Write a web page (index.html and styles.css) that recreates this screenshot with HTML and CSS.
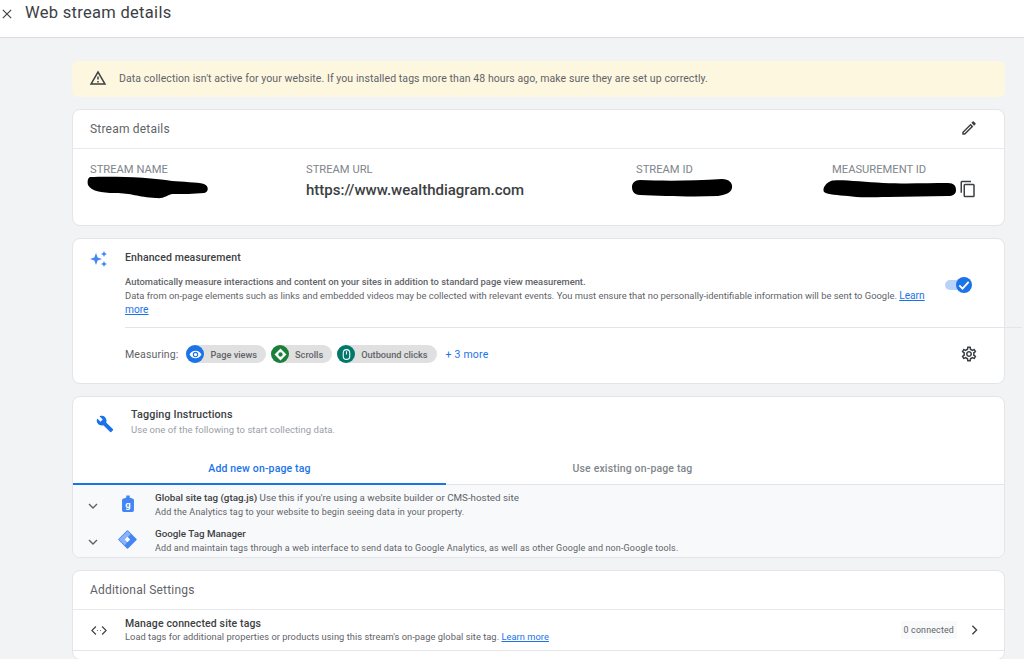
FILE: index.html
```html
<!DOCTYPE html>
<html lang="en">
<head>
    <meta charset="UTF-8">
    <meta name="viewport" content="width=device-width, initial-scale=1.0">
    <title>Web stream details</title>
    <link rel="stylesheet" href="styles.css">
</head>
<body>
    <header class="topbar">
        <svg class="close-icon" viewBox="0 0 12 12"><path d="M1 1l10 10M11 1L1 11"/></svg>
        <h1>Web stream details</h1>
    </header>

    <main class="content">
        <div class="banner">
            <svg class="warn-icon" viewBox="0 0 24 24"><path d="M1 21h22L12 2 1 21zm3.47-2L12 6l7.53 13H4.47zM11 16h2v2h-2zm0-6h2v4h-2z"/></svg>
            <span>Data collection isn't active for your website. If you installed tags more than 48 hours ago, make sure they are set up correctly.</span>
        </div>

        <section class="card">
            <div class="card-head">
                <h2>Stream details</h2>
                <svg class="icon-dark pencil-icon" viewBox="0 0 24 24"><path d="M3 17.25V21h3.75L17.81 9.94l-3.75-3.75L3 17.25zM5.92 19H5v-.92l9.06-9.06.92.92L5.92 19zM20.71 7.04a1 1 0 0 0 0-1.41l-2.34-2.34a1 1 0 0 0-1.41 0l-1.83 1.83 3.75 3.75 1.83-1.83z"/></svg>
            </div>
            <div class="stream-grid">
                <div>
                    <div class="field-label">STREAM NAME</div>
                    <svg class="blot blot-name" viewBox="0 0 121 23"><path d="M3 1C25 0 65 1 85 5c10 1 25 1 32 3 5 2 5 8 0 9-10 1-22 1-32 1-5 1-8 5-16 4C50 21 45 17 28 17 14 17 4 15 1 9 0 5 1 2 3 1z"/></svg>
                </div>
                <div>
                    <div class="field-label">STREAM URL</div>
                    <div class="field-value">https://www.wealthdiagram.com</div>
                </div>
                <div>
                    <div class="field-label">STREAM ID</div>
                    <svg class="blot blot-id" viewBox="0 0 101 18"><path d="M8 1C30 2 60 2 90 0c7 0 11 4 10 9-1 5-7 7-14 8C60 18 30 17 8 16 2 16 0 12 0 8 0 4 3 1 8 1z"/></svg>
                </div>
                <div>
                    <div class="field-label">MEASUREMENT ID</div>
                    <div class="id-row">
                        <svg class="blot blot-mid" viewBox="0 0 133 18"><path d="M8 1C14-1 40 2 60 3c25 1 45 0 65 0 6 0 8 3 8 7 0 4-3 6-8 6-20 0-40 1-60 1-15 0-30 1-40-1C15 15 5 15 1 12-1 8 3 3 8 1z"/></svg>
                        <svg class="icon-dark copy-icon" viewBox="0 0 24 24"><path d="M16 1H4a2 2 0 0 0-2 2v14h2V3h12V1zm3 4H8a2 2 0 0 0-2 2v14a2 2 0 0 0 2 2h11a2 2 0 0 0 2-2V7a2 2 0 0 0-2-2zm0 16H8V7h11v14z"/></svg>
                    </div>
                </div>
            </div>
        </section>

        <section class="card enhanced">
            <svg class="spark-icon" viewBox="0 0 18 18"><path d="M6 3l1.600 4.400L12 9l-4.400 1.600L6 15l-1.600-4.400L0 9l4.400-1.600zM14 1l.9 2.100L17 4l-2.100.9L14 7l-.9-2.100L11 4l2.100-.9zM14 11l.9 2.100L17 14l-2.100.9L14 17l-.9-2.100L11 14l2.100-.9z"/></svg>
            <div class="enhanced-body">
                <h3>Enhanced measurement</h3>
                <div class="enhanced-desc">
                    <div class="enhanced-text">
                        <p class="strong-line">Automatically measure interactions and content on your sites in addition to standard page view measurement.</p>
                        <p>Data from on-page elements such as links and embedded videos may be collected with relevant events. You must ensure that no personally-identifiable information will be sent to Google. <a href="#">Learn more</a></p>
                    </div>
                    <div class="toggle">
                        <span class="toggle-track"></span>
                        <span class="toggle-knob">
                            <svg viewBox="0 0 12 12"><path d="M2.500 6.300l2.400 2.400 4.600-5"/></svg>
                        </span>
                    </div>
                </div>
                <div class="divider"></div>
                <div class="measuring">
                    <span class="measuring-label">Measuring:</span>
                    <span class="chip">
                        <span class="chip-icon chip-blue">
                            <svg viewBox="0 0 24 24"><path d="M12 5C7 5 3 8 1 12c2 4 6 7 11 7s9-3 11-7c-2-4-6-7-11-7zm0 12a5 5 0 1 1 0-10 5 5 0 0 1 0 10zm0-8a3 3 0 1 0 0 6 3 3 0 0 0 0-6z"/></svg>
                        </span>
                        Page views
                    </span>
                    <span class="chip">
                        <span class="chip-icon chip-green">
                            <svg viewBox="0 0 24 24"><path d="M12 1l11 11-11 11L1 12zM12 8a4 4 0 1 0 0 8 4 4 0 0 0 0-8z"/></svg>
                        </span>
                        Scrolls
                    </span>
                    <span class="chip">
                        <span class="chip-icon chip-teal">
                            <svg viewBox="0 0 24 24"><path d="M12 2a7 7 0 0 0-7 7v6a7 7 0 0 0 14 0V9a7 7 0 0 0-7-7zm5 13a5 5 0 0 1-10 0V9a5 5 0 0 1 10 0v6zM11 6h2v6h-2z"/></svg>
                        </span>
                        Outbound clicks
                    </span>
                    <a class="more-link" href="#">+ 3 more</a>
                    <svg class="icon-dark gear-icon" viewBox="0 0 24 24"><path d="M19.430 12.980c.04-.32.07-.64.07-.98 0-.34-.03-.66-.07-.98l2.110-1.650c.19-.15.24-.42.12-.64l-2-3.460c-.09-.16-.26-.25-.44-.25-.06 0-.12.01-.17.03l-2.490 1c-.52-.4-1.080-.73-1.690-.98l-.38-2.650C14.460 2.180 14.250 2 14 2h-4c-.25 0-.46.18-.49.42l-.38 2.650c-.61.25-1.170.59-1.690.98l-2.490-1c-.06-.02-.12-.03-.18-.03-.17 0-.34.09-.43.25l-2 3.460c-.13.22-.07.49.12.64l2.110 1.650c-.04.32-.07.65-.07.98 0 .33.03.66.07.98l-2.110 1.650c-.19.15-.24.42-.12.64l2 3.460c.09.16.26.25.44.25.06 0 .12-.01.17-.03l2.490-1c.52.4 1.080.73 1.690.98l.38 2.650c.03.24.24.42.49.42h4c.25 0 .46-.18.49-.42l.38-2.650c.61-.25 1.170-.59 1.690-.98l2.490 1c.06.02.12.03.18.03.17 0 .34-.09.43-.25l2-3.460c.12-.22.07-.49-.12-.64l-2.110-1.650zm-1.980-1.710c.04.31.05.52.05.73 0 .21-.02.43-.05.73l-.14 1.130.89.7 1.080.84-.7 1.210-1.270-.51-1.040-.42-.9.68c-.43.32-.84.56-1.250.73l-1.060.43-.16 1.130-.2 1.350h-1.400l-.19-1.350-.16-1.130-1.060-.43c-.43-.18-.83-.41-1.230-.71l-.91-.7-1.060.43-1.270.51-.7-1.210 1.080-.84.89-.7-.14-1.130c-.03-.31-.05-.54-.05-.74s.02-.43.05-.73l.14-1.130-.89-.7-1.080-.84.7-1.210 1.270.51 1.040.42.9-.68c.43-.32.84-.56 1.250-.73l1.060-.43.16-1.130.2-1.350h1.390l.19 1.350.16 1.130 1.060.43c.43.18.83.41 1.230.71l.91.7 1.060-.43 1.270-.51.7 1.210-1.070.85-.89.7.14 1.130zM12 8c-2.210 0-4 1.790-4 4s1.790 4 4 4 4-1.790 4-4-1.790-4-4-4zm0 6c-1.100 0-2-.9-2-2s.9-2 2-2 2 .9 2 2-.9 2-2 2z"/></svg>
                </div>
            </div>
        </section>

        <section class="card tagging">
            <div class="tagging-head">
                <svg class="wrench-icon" viewBox="0 0 24 24"><path d="M22.700 19l-9.100-9.100c.9-2.300.4-5-1.500-6.900-2-2-5-2.400-7.400-1.300L9 6 6 9 1.600 4.700C.4 7.100.9 10.100 2.900 12.100c1.900 1.900 4.600 2.400 6.900 1.500l9.100 9.100c.4.400 1 .4 1.400 0l2.300-2.300c.5-.4.5-1.100.1-1.400z"/></svg>
                <div>
                    <h3>Tagging Instructions</h3>
                    <p>Use one of the following to start collecting data.</p>
                </div>
            </div>
            <div class="tabs">
                <div class="tab tab-active">Add new on-page tag</div>
                <div class="tab">Use existing on-page tag</div>
            </div>
            <div class="tag-list">
                <div class="tag-row">
                    <svg class="chevron" viewBox="0 0 12 12"><path d="M2 4l4 4 4-4"/></svg>
                    <svg class="tag-icon" viewBox="0 0 14 20"><path d="M5 .5h4V3l3 1a2 2 0 0 1 2 2v12a2 2 0 0 1-2 2H2a2 2 0 0 1-2-2V6a2 2 0 0 1 2-2l3-1z" fill="#4285f4"/><text x="7" y="15.500" text-anchor="middle" class="tag-letter">g</text></svg>
                    <div>
                        <div class="tag-title"><b>Global site tag (gtag.js)</b> Use this if you're using a website builder or CMS-hosted site</div>
                        <div class="tag-sub">Add the Analytics tag to your website to begin seeing data in your property.</div>
                    </div>
                </div>
                <div class="tag-row">
                    <svg class="chevron" viewBox="0 0 12 12"><path d="M2 4l4 4 4-4"/></svg>
                    <svg class="gtm-icon" viewBox="0 0 18 18"><path d="M9 1l8 8-8 8-8-8z" fill="#4285f4" stroke="#4285f4" stroke-width="1.500" stroke-linejoin="round"/><path d="M9 1l3 3-5 5 2 2-2.500 3.500L1 9z" fill="#8ab4f8"/><path d="M9 6.500l2.500 2.500L9 11.500 6.500 9z" fill="#fff"/></svg>
                    <div>
                        <div class="tag-title"><b>Google Tag Manager</b></div>
                        <div class="tag-sub tag-sub-long">Add and maintain tags through a web interface to send data to Google Analytics, as well as other Google and non-Google tools.</div>
                    </div>
                </div>
            </div>
        </section>

        <section class="card settings">
            <div class="card-head">
                <h2>Additional Settings</h2>
            </div>
            <div class="settings-row">
                <svg class="code-icon" viewBox="0 0 18 12"><path d="M5.500 1.500L1 6l4.500 4.500M12.500 1.500L17 6l-4.500 4.500M7 6h.8M10.200 6h.8"/></svg>
                <div class="settings-text">
                    <h3>Manage connected site tags</h3>
                    <p>Load tags for additional properties or products using this stream's on-page global site tag. <a href="#">Learn more</a></p>
                </div>
                <span class="count-badge">0 connected</span>
                <svg class="chevron-right" viewBox="0 0 8 12"><path d="M1.500 1l5 5-5 5"/></svg>
            </div>
        </section>
    </main>
</body>
</html>
```

FILE: styles.css
```css
* {
    box-sizing: border-box;
}

html,
body {
    height: 659px;
    overflow: hidden;
}

body {
    font-family: 'Roboto', sans-serif;
    margin: 0;
    background-color: #f1f3f4;
    color: #5f6368;
}

h1,
h2,
h3,
p {
    margin: 0;
    font-weight: 400;
}

a {
    color: #1a73e8;
}

svg {
    flex: none;
    display: block;
}

.topbar {
    height: 38px;
    background: #fff;
    border-bottom: 1px solid #dadce0;
    display: flex;
    align-items: flex-start;
    padding: 7px 0 0 2px;
}

.topbar h1 {
    font-size: 16.500px;
    line-height: 12px;
    color: #3c4043;
    margin-left: 13px;
    letter-spacing: 0.300px;
}

.close-icon {
    width: 10px;
    height: 10px;
    margin-top: 2px;
    fill: none;
    stroke: #3c4043;
    stroke-width: 1.400;
}

.content {
    padding: 23px 19px 0 72px;
    display: flex;
    flex-direction: column;
    gap: 12px;
}

.banner {
    height: 36px;
    background: #fef7e0;
    border-radius: 6px;
    display: flex;
    align-items: center;
    padding: 0 0 2px 17px;
    font-size: 10.500px;
    letter-spacing: 0.080px;
    color: #5f6368;
}

.warn-icon {
    width: 18px;
    height: 18px;
    margin-right: 12px;
    fill: #3c4043;
}

.card {
    background: #fff;
    border: 1px solid #e3e5e8;
    border-radius: 8px;
    flex: none;
}

.card-head {
    height: 39px;
    padding: 0 26px 0 17px;
    border-bottom: 1px solid #e8eaed;
    display: flex;
    align-items: center;
    justify-content: space-between;
}

.card-head h2 {
    font-size: 12px;
    letter-spacing: 0.200px;
    color: #5f6368;
}

.icon-dark {
    width: 18px;
    height: 18px;
    fill: #3c4043;
}

.pencil-icon {
    margin-bottom: 2px;
}

.stream-grid {
    height: 76px;
    padding: 14px 0 0 17px;
    display: grid;
    grid-template-columns: 216px 330px 196px 1fr;
}

.field-label {
    font-size: 11.200px;
    line-height: 13px;
    color: #80868b;
}

.field-value {
    font-size: 15px;
    font-weight: 500;
    line-height: 18px;
    margin-top: 5px;
    color: #3c4043;
}

.blot {
    fill: #000;
}

.blot-name {
    width: 121px;
    height: 23px;
    margin: 0 0 0 -3px;
}

.blot-id {
    width: 101px;
    height: 18px;
    margin: 3px 0 0 -4px;
}

.id-row {
    display: flex;
    align-items: flex-start;
    margin-left: -9px;
    gap: 3px;
}

.blot-mid {
    width: 133px;
    height: 18px;
    margin-top: 4px;
}

.copy-icon {
    margin-top: 4px;
}

.enhanced {
    height: 146px;
    display: flex;
    padding: 0 0 0 17px;
}

.spark-icon {
    width: 18px;
    height: 18px;
    margin-top: 11px;
    fill: #4285f4;
}

.enhanced-body {
    flex: 1;
    margin-left: 17px;
    padding-top: 12px;
    min-width: 0;
}

.enhanced-body h3 {
    font-size: 10.500px;
    font-weight: 500;
    line-height: 14px;
    letter-spacing: 0.100px;
    color: #3c4043;
}

.enhanced-desc {
    display: flex;
    margin-top: 11px;
    height: 51px;
}

.enhanced-text {
    width: 802px;
    font-size: 9.400px;
    line-height: 14px;
}

.strong-line {
    font-weight: 500;
    line-height: 12px;
    margin-bottom: 1px;
}

.enhanced-text a {
    font-size: 10.200px;
}

.toggle {
    position: relative;
    width: 28px;
    height: 16px;
    margin: 1px 0 0 18px;
}

.toggle-track {
    position: absolute;
    left: 0;
    top: 3px;
    width: 24px;
    height: 10px;
    border-radius: 5px;
    background: #b9d2f7;
}

.toggle-knob {
    position: absolute;
    left: 11px;
    top: 0;
    width: 16px;
    height: 16px;
    border-radius: 50%;
    background: #1a73e8;
}

.toggle-knob svg {
    width: 16px;
    height: 16px;
    fill: none;
    stroke: #fff;
    stroke-width: 1.400;
}

.divider {
    height: 1px;
    background: #e3e5e8;
    margin: 0 -18px 0 0;
}

.measuring {
    display: flex;
    align-items: center;
    height: 52px;
    font-size: 10.500px;
    padding-right: 26px;
}

.measuring-label {
    font-size: 10.600px;
    letter-spacing: 0.100px;
    margin-right: 8px;
}

.chip {
    display: flex;
    align-items: center;
    height: 18px;
    margin-right: 5px;
    padding-right: 9px;
    border-radius: 9px;
    background: #e0e0e0;
    font-size: 9.200px;
    font-weight: 500;
    color: #5f6368;
}

.chip-icon {
    width: 18px;
    height: 18px;
    margin-right: 6px;
    border-radius: 50%;
    display: flex;
    align-items: center;
    justify-content: center;
}

.chip-icon svg {
    width: 13px;
    height: 13px;
    fill: #fff;
    fill-rule: evenodd;
}

.chip-blue {
    background: #1a73e8;
}

.chip-green {
    background: #188038;
}

.chip-teal {
    background: #00796b;
}

.more-link {
    font-size: 10.500px;
    letter-spacing: 0.200px;
    margin-left: 4px;
    text-decoration: none;
}

.gear-icon {
    margin-left: auto;
}

.tagging {
    height: 162px;
    overflow: hidden;
}

.tagging-head {
    display: flex;
    height: 50px;
    padding: 12px 0 0 23px;
}

.wrench-icon {
    width: 18px;
    height: 18px;
    margin: 6px 17px 0 0;
    fill: #1a73e8;
}

.tagging-head h3 {
    font-size: 10.800px;
    font-weight: 500;
    line-height: 12px;
    color: #3c4043;
    letter-spacing: 0.120px;
}

.tagging-head p {
    font-size: 9.500px;
    line-height: 14px;
    margin-top: 2px;
    letter-spacing: 0.040px;
    color: #9aa0a6;
}

.tabs {
    display: grid;
    grid-template-columns: 373px 373px;
    height: 38px;
    border-bottom: 1px solid #e3e5e8;
    font-size: 10.500px;
    font-weight: 500;
    letter-spacing: 0.150px;
}

.tab {
    display: flex;
    align-items: center;
    justify-content: center;
    padding-top: 5px;
    color: #80868b;
}

.tab-active {
    color: #1a73e8;
    border-bottom: 2px solid #1a73e8;
    height: 38px;
    padding-top: 7px;
}

.tag-list {
    background: #f8f9fa;
    height: 72px;
    padding-top: 2px;
}

.tag-row {
    display: flex;
    height: 36px;
    padding-top: 4px;
}

.chevron {
    width: 12px;
    height: 12px;
    margin: 9px 0 0 14px;
    fill: none;
    stroke: #5f6368;
    stroke-width: 1.400;
}

.tag-icon {
    width: 12px;
    height: 17px;
    margin: 4px 21px 0 23px;
}

.tag-letter {
    font-size: 11px;
    font-weight: 700;
    fill: #fff;
}

.gtm-icon {
    width: 19px;
    height: 19px;
    margin: 3px 18px 0 19px;
}

.tag-title {
    font-size: 9.800px;
    line-height: 13px;
}

.tag-title b {
    font-weight: 500;
    color: #3c4043;
}

.tag-sub {
    font-size: 9px;
    line-height: 14px;
    margin-top: 1px;
    letter-spacing: 0.150px;
}

.tag-sub-long {
    letter-spacing: 0.140px;
}

.settings {
    height: 90px;
}

.settings-row {
    display: flex;
    align-items: center;
    height: 41px;
    border-bottom: 1px solid #e3e5e8;
    padding: 0 26px 0 17px;
}

.code-icon {
    width: 16px;
    height: 11px;
    margin: 1px 18px 0 1px;
    fill: none;
    stroke: #3c4043;
    stroke-width: 1.300;
}

.settings-text {
    flex: 1;
}

.settings-text h3 {
    font-size: 10.500px;
    font-weight: 500;
    line-height: 13px;
    letter-spacing: 0.130px;
    color: #3c4043;
}

.settings-text p {
    font-size: 9.300px;
    line-height: 14px;
    letter-spacing: 0.040px;
}

.count-badge {
    background: #f8f9fa;
    font-size: 8.800px;
    letter-spacing: 0.200px;
    padding: 4px 3px;
    margin-right: 14px;
}

.chevron-right {
    width: 7px;
    height: 10px;
    fill: none;
    stroke: #3c4043;
    stroke-width: 1.600;
}
```
